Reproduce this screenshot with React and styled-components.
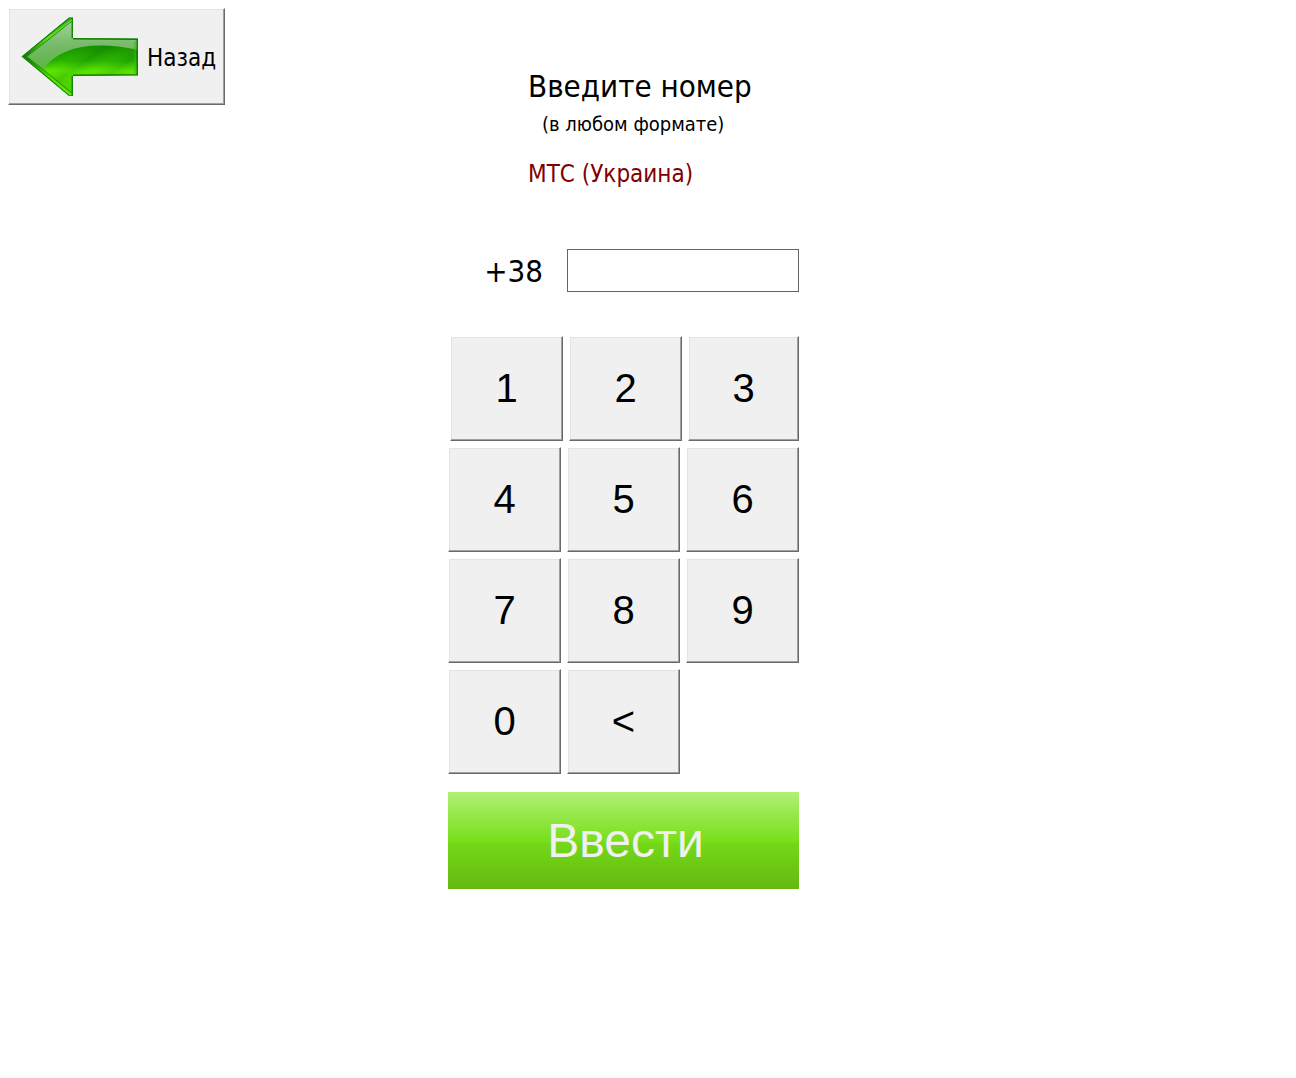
import React, { useState } from "react";
import styled, { createGlobalStyle, css } from "styled-components";

const GlobalStyle = createGlobalStyle`
  *, *::before, *::after { box-sizing: border-box; }
  body {
    margin: 0;
    background: #ffffff;
    color: #000000;
    font-family: Tahoma, "DejaVu Sans Condensed", "Noto Sans", sans-serif;
  }
`;

const Page = styled.div`
  display: grid;
  grid-template-columns: minmax(224px, 1fr) 400px minmax(0, 1fr);
  align-items: start;
  padding: 8px 0;
`;

const raised = css`
  background: #f0f0f0;
  border: 1px solid;
  border-color: #ffffff #696969 #696969 #ffffff;
  box-shadow: inset -1px -1px #a0a0a0, inset 1px 1px #e3e3e3;
  color: #000000;
  cursor: pointer;
`;

const BackButton = styled.button`
  ${raised}
  display: flex;
  align-items: center;
  justify-self: start;
  gap: 8px;
  height: 97px;
  margin-left: 8px;
  padding: 0 8px 0 12px;
  font-family: inherit;
  font-size: 24px;
  line-height: 32px;
`;

const BackLabel = styled.span`
  padding-top: 2px;
`;

const Main = styled.main`
  display: flex;
  flex-direction: column;
  padding-top: 56px;
`;

const Heading = styled.header`
  display: flex;
  flex-direction: column;
  padding-left: 80px;
`;

const Title = styled.h1`
  margin: 0;
  font-size: 31px;
  font-weight: 400;
  line-height: 44px;
`;

const Hint = styled.p`
  margin: 0;
  padding-left: 14px;
  font-size: 20px;
  line-height: 32px;
`;

const Operator = styled.p`
  margin: 16px 0 0;
  color: #800000;
  font-size: 24px;
  line-height: 36px;
`;

const Form = styled.form`
  display: flex;
  flex-direction: column;
  width: 351px;
  margin-top: 57px;
`;

const PhoneRow = styled.div`
  display: flex;
  align-items: center;
  justify-content: flex-end;
  gap: 24px;
`;

const Prefix = styled.label`
  font-size: 31px;
  line-height: 40px;
`;

const PhoneInput = styled.input`
  width: 232px;
  height: 43px;
  padding: 0 8px;
  border: 1px solid #646464;
  border-radius: 0;
  background: #ffffff;
  font-family: inherit;
  font-size: 31px;
  outline: none;
`;

const Keypad = styled.div`
  display: flex;
  flex-direction: column;
  gap: 6px;
  margin-top: 44px;
`;

const KeyRow = styled.div`
  display: flex;
  gap: 6px;
  padding-left: ${({ $indent }) => ($indent ? "2px" : "0")};
`;

const Key = styled.button`
  ${raised}
  flex: 0 ${({ $shrink }) => ($shrink ? 1 : 0)} 113px;
  min-width: 0;
  height: 105px;
  padding: 0 0 2px;
  font-family: Arial, "Liberation Sans", sans-serif;
  font-size: 40px;
  line-height: 48px;
`;

const Submit = styled.button`
  height: 97px;
  margin-top: 18px;
  padding: 0 0 0 4px;
  border: 0;
  background: linear-gradient(#b0f074 0%, #78de18 52%, #74d818 53%, #64b910 100%);
  color: #f0f0f0;
  font-family: Arial, "Liberation Sans", sans-serif;
  font-size: 48px;
  line-height: 56px;
  cursor: pointer;
`;

function ArrowIcon() {
  const outline = "M0.5 39.5 L48 0.5 H52 V21 L117 21.5 V58.5 L52 59 V79 H48 Z";
  return (
    <svg width="118" height="80" viewBox="0 0 118 80" aria-hidden="true">
      <defs>
        <linearGradient id="body" x1="0" y1="0" x2="0" y2="1">
          <stop offset="0" stopColor="#1f9a0c" />
          <stop offset="0.36" stopColor="#128a00" />
          <stop offset="0.55" stopColor="#28b000" />
          <stop offset="0.68" stopColor="#5ee600" />
          <stop offset="1" stopColor="#48c800" />
        </linearGradient>
        <linearGradient id="gloss" x1="0" y1="0" x2="0" y2="1">
          <stop offset="0" stopColor="#b4e0ac" />
          <stop offset="0.5" stopColor="#84c078" />
          <stop offset="1" stopColor="#60b44c" />
        </linearGradient>
        <linearGradient id="rim" x1="0" y1="0" x2="0" y2="1">
          <stop offset="0" stopColor="#34b810" />
          <stop offset="0.25" stopColor="#5ee60c" />
          <stop offset="0.46" stopColor="#187c08" />
          <stop offset="0.54" stopColor="#187c08" />
          <stop offset="0.75" stopColor="#50d808" />
          <stop offset="1" stopColor="#66f00c" />
        </linearGradient>
        <linearGradient id="streak" x1="0" y1="0" x2="7" y2="10" gradientUnits="userSpaceOnUse" spreadMethod="reflect">
          <stop offset="0" stopColor="#0a7800" stopOpacity="0.2" />
          <stop offset="1" stopColor="#4ce000" stopOpacity="0.1" />
        </linearGradient>
        <clipPath id="shape"><path d={outline} /></clipPath>
      </defs>
      <g clipPath="url(#shape)">
        <path d={outline} fill="url(#body)" />
        <path d={outline} fill="url(#streak)" />
        <path d="M0 40 L52 0 V21 H118 V33 Q48 18 22 52 Z" fill="url(#gloss)" fillOpacity="0.9" />
        <path d="M52 21 V0.5 H48 L0.5 39.5 L48 79 H52 V59" fill="none" stroke="#148a04" strokeWidth="3" />
        <path d="M50 2 L4 39.5 L50 78" fill="none" stroke="url(#rim)" strokeWidth="2" />
        <path d="M51 4 L6 39.5 L51 76" fill="none" stroke="#209408" strokeWidth="1" />
        <path d="M52 21 L117 21.5 V58.5 L52 59" fill="none" stroke="#108000" strokeWidth="3" />
        <path d="M114 24 V56" fill="none" stroke="#38b818" strokeWidth="1" />
      </g>
    </svg>
  );
}

const rows = [["1", "2", "3"], ["4", "5", "6"], ["7", "8", "9"], ["0", "<"]];

export default function App() {
  const [phone, setPhone] = useState("");

  const press = (key) =>
    setPhone((value) => (key === "<" ? value.slice(0, -1) : value + key));

  return (
    <>
      <GlobalStyle />
      <Page>
        <BackButton type="button">
          <ArrowIcon />
          <BackLabel>Назад</BackLabel>
        </BackButton>
        <Main>
          <Heading>
            <Title>Введите номер</Title>
            <Hint>(в любом формате)</Hint>
            <Operator>МТС (Украина)</Operator>
          </Heading>
          <Form onSubmit={(event) => event.preventDefault()}>
            <PhoneRow>
              <Prefix htmlFor="phone">+38</Prefix>
              <PhoneInput
                id="phone"
                type="tel"
                value={phone}
                onChange={(event) => setPhone(event.target.value)}
              />
            </PhoneRow>
            <Keypad>
              {rows.map((keys, row) => (
                <KeyRow key={row} $indent={row === 0}>
                  {keys.map((key) => (
                    <Key key={key} type="button" $shrink={key === "3"} onClick={() => press(key)}>
                      {key}
                    </Key>
                  ))}
                </KeyRow>
              ))}
            </Keypad>
            <Submit type="submit">Ввести</Submit>
          </Form>
        </Main>
      </Page>
    </>
  );
}
